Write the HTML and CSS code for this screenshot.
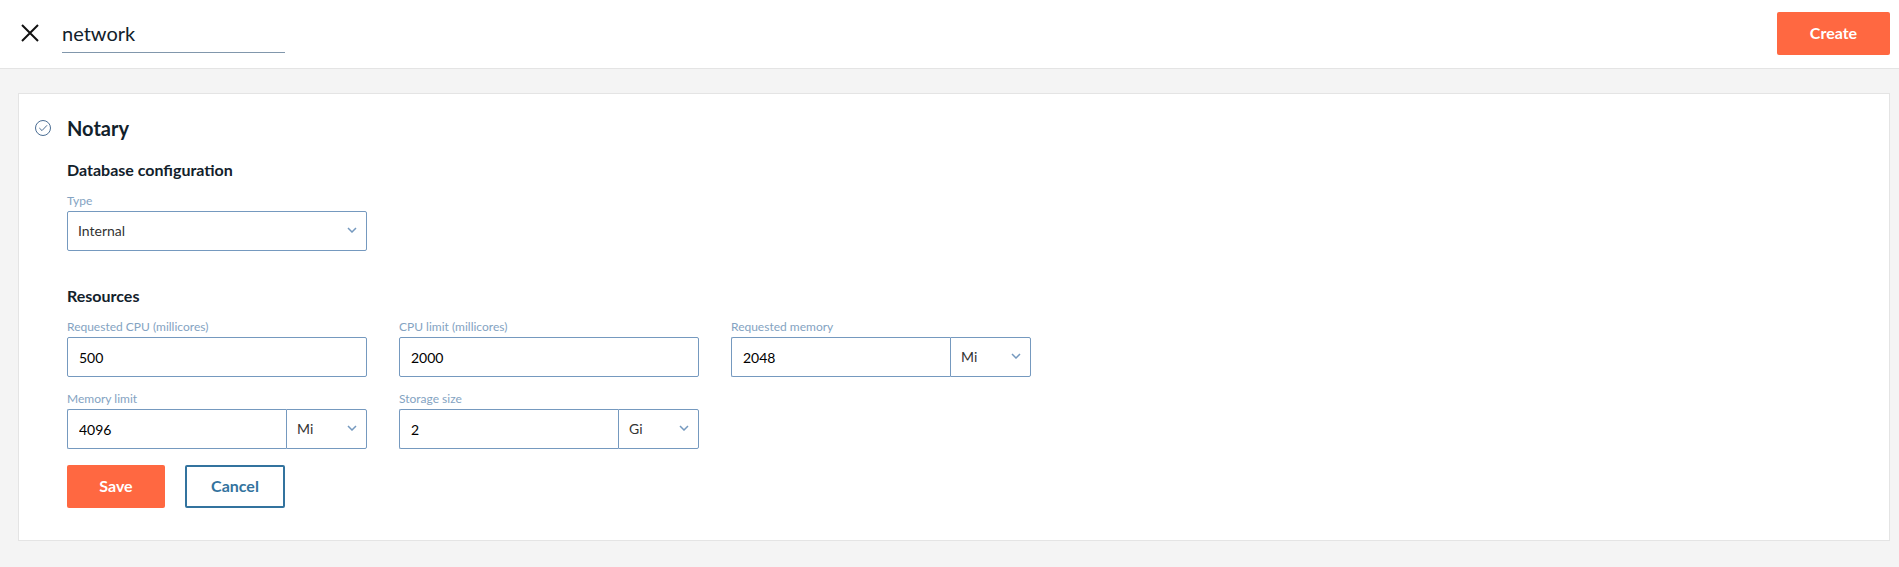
FILE: index.html
```
<!DOCTYPE html>
<html lang="en">

<head>
  <meta charset="utf-8">
  <title>network</title>
  <meta name="viewport" content="width=device-width, initial-scale=1">
  <link rel="stylesheet" href="styles.css">
</head>

<body>
  <header class="topbar">
    <button type="button" class="btn-close" aria-label="Close">
      <svg width="18" height="18" viewBox="0 0 18 18">
        <path d="M1 1L17 17M17 1L1 17" />
      </svg>
    </button>
    <input type="text" class="name-input" aria-label="Name" value="network">
    <button type="submit" form="notary" class="btn btn-primary btn-create">Create</button>
  </header>

  <main class="card">
    <svg class="status" width="16" height="16" viewBox="0 0 16 16">
      <circle cx="8" cy="8" r="7.5" />
      <path d="M4.3 8L7 10.6L12 5.3" />
    </svg>
    <form id="notary" class="form">
      <h1>Notary</h1>

      <h2>Database configuration</h2>
      <div class="fields">
        <div class="group">
          <label for="dbType">Type</label>
          <div class="select">
            <select id="dbType">
              <option>Internal</option>
              <option>External</option>
            </select>
            <svg class="chevron" width="10" height="6" viewBox="0 0 10 6"><path d="M1 1L5 5L9 1" /></svg>
          </div>
        </div>
      </div>

      <h2 class="resources">Resources</h2>
      <div class="fields">
        <div class="group">
          <label for="cpuRequest">Requested CPU (millicores)</label>
          <input type="text" id="cpuRequest" value="500">
        </div>
        <div class="group">
          <label for="cpuLimit">CPU limit (millicores)</label>
          <input type="text" id="cpuLimit" value="2000">
        </div>
        <div class="group">
          <label for="memoryRequest">Requested memory</label>
          <div class="with-unit">
            <input type="text" id="memoryRequest" value="2048">
            <div class="select">
              <select aria-label="Requested memory unit">
                <option>Mi</option>
                <option>Gi</option>
              </select>
              <svg class="chevron" width="10" height="6" viewBox="0 0 10 6"><path d="M1 1L5 5L9 1" /></svg>
            </div>
          </div>
        </div>
        <div class="group">
          <label for="memoryLimit">Memory limit</label>
          <div class="with-unit">
            <input type="text" id="memoryLimit" value="4096">
            <div class="select">
              <select aria-label="Memory limit unit">
                <option>Mi</option>
                <option>Gi</option>
              </select>
              <svg class="chevron" width="10" height="6" viewBox="0 0 10 6"><path d="M1 1L5 5L9 1" /></svg>
            </div>
          </div>
        </div>
        <div class="group">
          <label for="storage">Storage size</label>
          <div class="with-unit">
            <input type="text" id="storage" value="2">
            <div class="select">
              <select aria-label="Storage size unit">
                <option>Gi</option>
                <option>Mi</option>
              </select>
              <svg class="chevron" width="10" height="6" viewBox="0 0 10 6"><path d="M1 1L5 5L9 1" /></svg>
            </div>
          </div>
        </div>
      </div>

      <div class="actions">
        <button type="submit" class="btn btn-primary">Save</button>
        <button type="button" class="btn btn-outline">Cancel</button>
      </div>
    </form>
  </main>
</body>

</html>
```

FILE: styles.css
```
* {
  box-sizing: border-box;
}

body {
  margin: 0;
  background-color: #f4f4f4;
  color: #12212b;
  font-family: Lato, sans-serif;
}

input,
select,
button {
  margin: 0;
  font-family: inherit;
}

svg {
  display: block;
  fill: none;
}

.topbar {
  display: flex;
  align-items: center;
  padding: 12px 9px 13px 21px;
  background-color: #fff;
  border-bottom: 1px solid #e4e4e4;
}

.btn-close {
  padding: 0 0 1px;
  border: none;
  background: none;
  cursor: pointer;
}

.btn-close svg {
  stroke: #111;
  stroke-width: 2;
}

.name-input {
  width: 223px;
  height: 38px;
  margin-left: 23px;
  padding: 0;
  border: none;
  border-bottom: 1px solid #8197ac;
  background: none;
  color: #12212b;
  font-size: 20px;
}

.card {
  display: flex;
  align-items: flex-start;
  margin: 24px 9px 24px 18px;
  padding: 22px 16px 32px;
  background-color: #fff;
  border: 1px solid #e4e4e4;
}

.status {
  flex: none;
  margin: 4px 16px 0 0;
  stroke: #4a6d93;
}

.form {
  flex: 1;
}

h1,
h2 {
  margin: 0;
  font-weight: bold;
}

h1 {
  margin-bottom: 19px;
  font-size: 20px;
  line-height: 24px;
}

h2 {
  margin-bottom: 14px;
  font-size: 16px;
  line-height: 22px;
}

.resources {
  margin-top: 34px;
}

.fields {
  display: grid;
  grid-template-columns: repeat(3, 300px);
  gap: 16px 32px;
}

.group label {
  display: block;
  margin-bottom: 4px;
  color: #84a3c2;
  font-size: 12px;
  line-height: 12px;
}

.group input,
.group select {
  display: block;
  width: 100%;
  height: 40px;
  border: 1px solid #7599bf;
  border-radius: 2px;
  background-color: #fff;
  font-size: 14px;
}

.group input {
  padding: 0 11px;
  color: #000;
}

.group select {
  padding: 0 10px 2px;
  color: #333;
  appearance: none;
}

.select {
  position: relative;
}

.chevron {
  position: absolute;
  top: 16px;
  right: 10px;
  stroke: #7599bf;
  stroke-width: 1.5;
  pointer-events: none;
}

.with-unit {
  display: flex;
}

.with-unit input {
  flex: 1;
  min-width: 0;
  border-right: none;
  border-radius: 2px 0 0 2px;
}

.with-unit .select {
  width: 81px;
}

.with-unit select {
  border-radius: 0 2px 2px 0;
}

.actions {
  display: flex;
  gap: 20px;
  margin-top: 16px;
}

.btn {
  min-width: 98px;
  height: 43px;
  padding: 0 32px 2px;
  border: none;
  border-radius: 2px;
  font-size: 16px;
  font-weight: bold;
  cursor: pointer;
}

.btn-primary {
  background-color: #ff6841;
  color: #fff;
}

.btn-outline {
  min-width: 100px;
  padding: 0 24px 2px;
  border: 2px solid #33739e;
  background-color: #fff;
  color: #33739e;
}

.btn-create {
  min-width: 113px;
  margin-left: auto;
}
```
